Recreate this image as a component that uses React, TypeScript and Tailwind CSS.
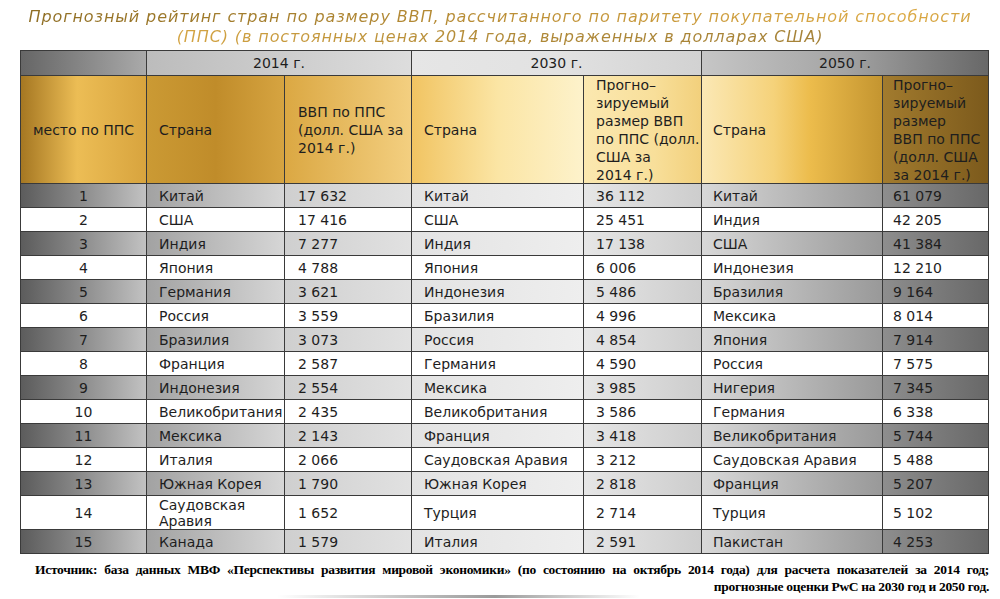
const rows: [string, string, string, string, string, string, string][] = [
  ['1', 'Китай', '17 632', 'Китай', '36 112', 'Китай', '61 079'],
  ['2', 'США', '17 416', 'США', '25 451', 'Индия', '42 205'],
  ['3', 'Индия', '7 277', 'Индия', '17 138', 'США', '41 384'],
  ['4', 'Япония', '4 788', 'Япония', '6 006', 'Индонезия', '12 210'],
  ['5', 'Германия', '3 621', 'Индонезия', '5 486', 'Бразилия', '9 164'],
  ['6', 'Россия', '3 559', 'Бразилия', '4 996', 'Мексика', '8 014'],
  ['7', 'Бразилия', '3 073', 'Россия', '4 854', 'Япония', '7 914'],
  ['8', 'Франция', '2 587', 'Германия', '4 590', 'Россия', '7 575'],
  ['9', 'Индонезия', '2 554', 'Мексика', '3 985', 'Нигерия', '7 345'],
  ['10', 'Великобритания', '2 435', 'Великобритания', '3 586', 'Германия', '6 338'],
  ['11', 'Мексика', '2 143', 'Франция', '3 418', 'Великобритания', '5 744'],
  ['12', 'Италия', '2 066', 'Саудовская Аравия', '3 212', 'Саудовская Аравия', '5 488'],
  ['13', 'Южная Корея', '1 790', 'Южная Корея', '2 818', 'Франция', '5 207'],
  ['14', 'Саудовская Аравия', '1 652', 'Турция', '2 714', 'Турция', '5 102'],
  ['15', 'Канада', '1 579', 'Италия', '2 591', 'Пакистан', '4 253'],
];

// серые полосы нечётных строк — у каждой колонки свой градиент
const grayCols = [
  'bg-gradient-to-r from-[#5c5c5c] to-[#c2c2c2]',
  'bg-gradient-to-r from-[#a2a2a2] to-[#d6d6d6]',
  'bg-gradient-to-r from-[#cfcfcf] to-[#e1e1e1]',
  'bg-gradient-to-r from-[#e3e3e3] to-[#eeeeee]',
  'bg-gradient-to-r from-[#e6e6e6] to-[#cdcdcd]',
  'bg-gradient-to-r from-[#d8d8d8] to-[#999999]',
  'bg-gradient-to-r from-[#8e8e8e] to-[#686868]',
];

const goldCols = [
  'bg-[linear-gradient(to_right,#a57722_0%,#ecbd55_45%,#d8a43e_100%)]',
  'bg-[linear-gradient(to_right,#cb9a34_0%,#c08c2a_50%,#d6a441_100%)]',
  'bg-[linear-gradient(to_right,#dba843_0%,#f3cf80_100%)]',
  'bg-[linear-gradient(to_right,#f1c462_0%,#fbe5a4_50%,#fdf2cb_100%)]',
  'bg-[linear-gradient(to_right,#fbe8b0_0%,#f8df9a_60%,#f2d07c_100%)]',
  'bg-[linear-gradient(to_right,#fbe8b5_0%,#f5d27a_40%,#ecbc4c_60%,#c49530_100%)]',
  'bg-[linear-gradient(to_right,#a27b2e_0%,#7c5a1c_100%)]',
];

const pad = ['justify-center', 'pl-[12px]', 'pl-[13px]', 'pl-[12px]', 'pl-[12px]', 'pl-[11px]', 'pl-[10px]'];

export default function App() {
  return (
    <div className="h-[599px] w-[1000px] overflow-hidden bg-white font-['DejaVu_Sans',sans-serif] text-[#1e1e1e]">
      <div className="h-[50px] pt-[7px] text-center text-[16px] italic leading-[20px] tracking-[0.9px]">
        <span className="bg-[linear-gradient(to_right,#8f6e24,#c3953a_35%,#dba944_55%,#b08937_80%,#a58238)] bg-clip-text text-transparent">
          Прогнозный рейтинг стран по размеру ВВП, рассчитанного по паритету покупательной способности
          <br />
          (ППС) (в постоянных ценах 2014 года, выраженных в долларах США)
        </span>
      </div>

      <div className="ml-[20px] grid w-[969px] grid-cols-[125px_137px_126px_171px_117px_180px_105px] grid-rows-[24px_107px_repeat(13,23px)_33px_23px] gap-px bg-[#3a3a3a] p-px text-[14px] leading-[16px]">
        {/* строка с годами */}
        <div className="bg-gradient-to-r from-[#666666] to-[#aaaaaa]" />
        <div className="col-span-2 flex items-center justify-center bg-gradient-to-r from-[#bcbcbc] to-[#dddddd]">2014 г.</div>
        <div className="col-span-2 flex items-center justify-center bg-gradient-to-r from-[#e6e6e6] via-[#e2e2e2] to-[#d2d2d2]">2030 г.</div>
        <div className="col-span-2 flex items-center justify-center bg-gradient-to-r from-[#c6c6c6] via-[#a4a4a4] to-[#686868]">2050 г.</div>

        {/* золотая шапка */}
        <div className={`flex items-center pl-[12px] ${goldCols[0]}`}>место по ППС</div>
        <div className={`flex items-center pl-[12px] ${goldCols[1]}`}>Страна</div>
        <div className={`flex items-center pl-[13px] leading-[18px] ${goldCols[2]}`}>
          <span>
            ВВП по ППС
            <br />
            (долл. США за
            <br />
            2014 г.)
          </span>
        </div>
        <div className={`flex items-center pl-[12px] ${goldCols[3]}`}>Страна</div>
        <div className={`overflow-hidden pl-[12px] leading-[18px] ${goldCols[4]}`}>
          Прогно–
          <br />
          зируемый
          <br />
          размер ВВП
          <br />
          по ППС (долл.
          <br />
          США за
          <br />
          2014 г.)
        </div>
        <div className={`flex items-center pl-[11px] ${goldCols[5]}`}>Страна</div>
        <div className={`overflow-hidden pl-[10px] leading-[18px] ${goldCols[6]}`}>
          Прогно–
          <br />
          зируемый
          <br />
          размер
          <br />
          ВВП по ППС
          <br />
          (долл. США
          <br />
          за 2014 г.)
        </div>

        {rows.map((r, i) =>
          r.map((v, j) => (
            <div
              key={`${i}-${j}`}
              className={`flex items-center ${pad[j]} ${i % 2 === 0 ? grayCols[j] : 'bg-white'}`}
            >
              {v}
            </div>
          )),
        )}
      </div>

      <div className="mt-[7px] ml-[35px] mr-[11px] font-['Liberation_Serif',serif] text-[13.5px] font-bold leading-[17px] tracking-[-0.3px] text-black">
        <p className="text-justify [text-align-last:justify]">
          Источник: база данных МВФ «Перспективы развития мировой экономики» (по состоянию на октябрь 2014 года) для расчета показателей за 2014 год;
        </p>
        <p className="text-right">прогнозные оценки PwC на 2030 год и 2050 год.</p>
      </div>
      <div className="ml-[277px] h-[3px] w-[363px] bg-[linear-gradient(to_right,transparent,#9a9a9a_60%,transparent)]" />
    </div>
  );
}
